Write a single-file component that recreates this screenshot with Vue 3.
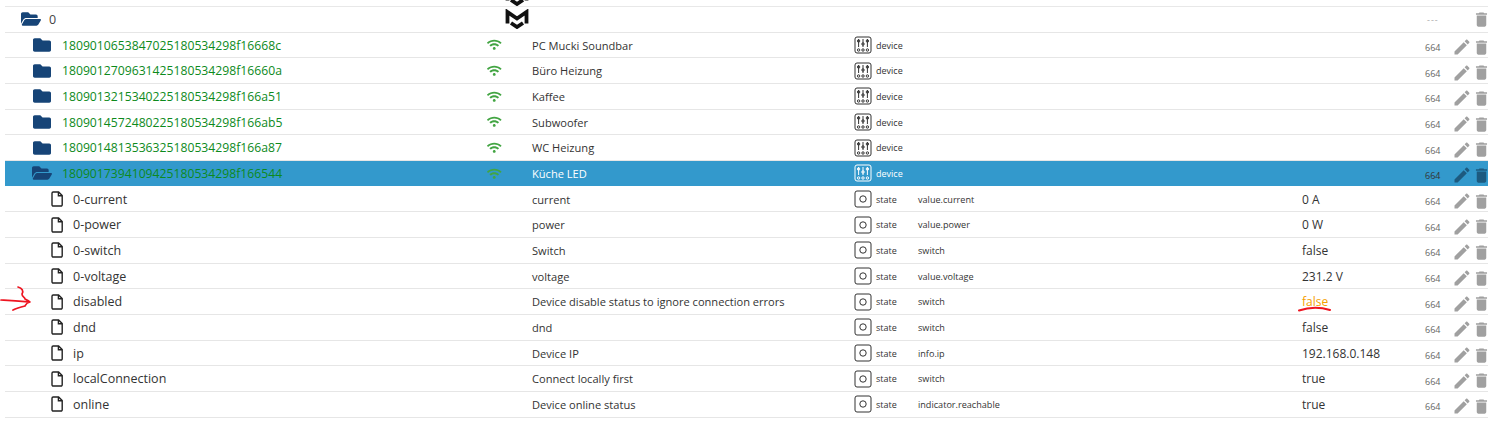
<script setup>
const folders = [
  { id: '1809010653847025180534298f16668c', name: 'PC Mucki Soundbar' },
  { id: '1809012709631425180534298f16660a', name: 'Büro Heizung' },
  { id: '1809013215340225180534298f166a51', name: 'Kaffee' },
  { id: '1809014572480225180534298f166ab5', name: 'Subwoofer' },
  { id: '1809014813536325180534298f166a87', name: 'WC Heizung' },
]
const states = [
  { id: '0-current', name: 'current', role: 'value.current', value: '0 A' },
  { id: '0-power', name: 'power', role: 'value.power', value: '0 W' },
  { id: '0-switch', name: 'Switch', role: 'switch', value: 'false' },
  { id: '0-voltage', name: 'voltage', role: 'value.voltage', value: '231.2 V' },
  { id: 'disabled', name: 'Device disable status to ignore connection errors', role: 'switch', value: 'false', warn: true },
  { id: 'dnd', name: 'dnd', role: 'switch', value: 'false' },
  { id: 'ip', name: 'Device IP', role: 'info.ip', value: '192.168.0.148' },
  { id: 'localConnection', name: 'Connect locally first', role: 'switch', value: 'true' },
  { id: 'online', name: 'Device online status', role: 'indicator.reachable', value: 'true' },
]
const folderPath = 'M464 128H272l-64-64H48C21.49 64 0 85.49 0 112v288c0 26.51 21.49 48 48 48h416c26.51 0 48-21.49 48-48V176c0-26.51-21.49-48-48-48z'
const openPath = 'M572.694 292.093L500.27 416.248A63.997 63.997 0 0 1 444.989 448H45.025c-18.523 0-30.064-20.093-20.731-36.093l72.424-124.155A64 64 0 0 1 152 256h399.964c18.523 0 30.064 20.093 20.73 36.093zM152 224h328v-48c0-26.51-21.49-48-48-48H272l-64-64H48C21.49 64 0 85.49 0 112v278.046l69.077-118.418C86.214 242.25 117.989 224 152 224z'
const wifiPath = 'M634.91 154.88C457.74-8.99 182.19-8.93 5.09 154.88c-6.66 6.16-6.79 16.59-.35 22.98l34.24 33.97c6.14 6.1 16.02 6.23 22.4.38 145.92-133.68 371.3-133.71 517.25 0 6.38 5.85 16.26 5.71 22.4-.38l34.24-33.97c6.43-6.39 6.3-16.82-.36-22.98zM320 352c-35.35 0-64 28.65-64 64s28.65 64 64 64 64-28.65 64-64-28.65-64-64-64zm202.67-83.59c-115.26-101.93-290.21-101.82-405.34 0-6.9 6.1-7.12 16.69-.57 23.15l34.44 33.99c6 5.92 15.66 6.32 22.05.8 83.95-72.57 209.74-72.41 293.49 0 6.39 5.52 16.05 5.13 22.05-.8l34.44-33.99c6.56-6.46 6.33-17.06-.56-23.15z'
const pencilPath = 'M20.71 7.04c.39-.39.39-1.04 0-1.41l-2.34-2.34c-.37-.39-1.02-.39-1.41 0l-1.84 1.83 3.75 3.75M3 17.25V21h3.75L17.81 9.93l-3.75-3.75L3 17.25z'
const trashPath = 'M6 19c0 1.1.9 2 2 2h8c1.1 0 2-.9 2-2V7H6v12zM19 4h-3.5l-1-1h-5l-1 1H5v2h14V4z'
</script>

<template>
  <div class="page">
    <div class="strip">
      <svg class="logo logo-top" viewBox="0 0 24 20"><path d="M2.5 14.5V3L12 9.5L21.5 3V14.5M6 14L12 18L18 14" /></svg>
    </div>

    <div class="row root">
      <div class="c-tree">
        <svg class="open-root" viewBox="0 0 576 512"><path :d="openPath" /></svg>
        <span class="root-id">0</span>
      </div>
      <div class="c-wifi">
        <svg class="logo" viewBox="0 0 24 20"><path d="M2.5 14.5V3L12 9.5L21.5 3V14.5M6 14L12 18L18 14" /></svg>
      </div>
      <div class="c-name"></div>
      <div class="c-type"></div>
      <div class="c-role"></div>
      <div class="c-value"></div>
      <div class="c-acl dashes">---</div>
      <div class="c-pen"></div>
      <svg class="trash" viewBox="0 0 24 24"><path :d="trashPath" /></svg>
    </div>

    <div v-for="f in folders" :key="f.id" class="row">
      <div class="c-tree lvl1">
        <svg class="folder" viewBox="0 0 512 512"><path :d="folderPath" /></svg>
        <span class="green">{{ f.id }}</span>
      </div>
      <div class="c-wifi"><svg class="wifi" viewBox="0 0 640 512"><path :d="wifiPath" /></svg></div>
      <div class="c-name">{{ f.name }}</div>
      <div class="c-type">
        <svg class="type-icon" viewBox="0 0 18 18">
          <rect x="1" y="1" width="16" height="16" rx="2" />
          <path d="M4.6 3V11M9 3V11M13.4 3V11" />
          <circle cx="4.6" cy="5" r="1.2" /><circle cx="9" cy="8" r="1.2" /><circle cx="13.4" cy="5" r="1.2" />
          <circle cx="4.6" cy="14" r="1.2" /><circle cx="9" cy="14" r="1.2" /><circle cx="13.4" cy="14" r="1.2" />
        </svg>
        <span>device</span>
      </div>
      <div class="c-role"></div>
      <div class="c-value"></div>
      <div class="c-acl">664</div>
      <div class="c-pen"><svg class="pen" viewBox="0 0 24 24"><path :d="pencilPath" /></svg></div>
      <svg class="trash low" viewBox="0 0 24 24"><path :d="trashPath" /></svg>
    </div>

    <div class="row selected">
      <div class="c-tree lvl1">
        <svg class="folder" viewBox="0 0 576 512"><path :d="openPath" /></svg>
        <span class="green">1809017394109425180534298f166544</span>
      </div>
      <div class="c-wifi"><svg class="wifi" viewBox="0 0 640 512"><path :d="wifiPath" /></svg></div>
      <div class="c-name">Küche LED</div>
      <div class="c-type">
        <svg class="type-icon" viewBox="0 0 18 18">
          <rect x="1" y="1" width="16" height="16" rx="2" />
          <path d="M4.6 3V11M9 3V11M13.4 3V11" />
          <circle cx="4.6" cy="5" r="1.2" /><circle cx="9" cy="8" r="1.2" /><circle cx="13.4" cy="5" r="1.2" />
          <circle cx="4.6" cy="14" r="1.2" /><circle cx="9" cy="14" r="1.2" /><circle cx="13.4" cy="14" r="1.2" />
        </svg>
        <span>device</span>
      </div>
      <div class="c-role"></div>
      <div class="c-value"></div>
      <div class="c-acl">664</div>
      <div class="c-pen"><svg class="pen" viewBox="0 0 24 24"><path :d="pencilPath" /></svg></div>
      <svg class="trash low" viewBox="0 0 24 24"><path :d="trashPath" /></svg>
    </div>

    <div v-for="s in states" :key="s.id" class="row">
      <div class="c-tree lvl2">
        <svg class="file" viewBox="0 0 12 16"><path d="M1 2.2A1.2 1.2 0 0 1 2.2 1H7.6L11.2 4.6V13.8A1.2 1.2 0 0 1 10 15H2.2A1.2 1.2 0 0 1 1 13.8ZM7.4 1V4.8H11.2" /></svg>
        <span class="state-id">{{ s.id }}</span>
      </div>
      <div class="c-wifi"></div>
      <div class="c-name">{{ s.name }}</div>
      <div class="c-type">
        <svg class="type-icon" viewBox="0 0 18 18">
          <rect x="1" y="1" width="16" height="16" rx="2" />
          <circle cx="9" cy="9" r="3.2" />
        </svg>
        <span>state</span>
      </div>
      <div class="c-role">{{ s.role }}</div>
      <div class="c-value" :class="{ warn: s.warn }">{{ s.value }}</div>
      <div class="c-acl">664</div>
      <div class="c-pen"><svg class="pen" viewBox="0 0 24 24"><path :d="pencilPath" /></svg></div>
      <svg class="trash low" viewBox="0 0 24 24"><path :d="trashPath" /></svg>
    </div>

    <div class="row last">
      <div class="c-tree lvl1">
        <svg class="folder" viewBox="0 0 512 512"><path :d="folderPath" /></svg>
      </div>
    </div>

    <svg class="mark arrow" viewBox="0 0 36 30">
      <path d="M1 15C10 15.5 20 16 30 17M18 2C22 3 24 6 22 9C22 12 25 12 25 14C27 15 29 16 30 17C26 18 26 19 25 21C21 22 17 23 13 25" />
    </svg>
    <svg class="mark underline" viewBox="0 0 34 6">
      <path d="M1 4.5C10 1.5 22 1 32 4" />
    </svg>
  </div>
</template>

<style>
html, body { margin: 0; background: #fff; overflow: hidden; }
</style>

<style scoped>
.page {
  position: relative;
  width: 1488px;
  height: 423px;
  overflow: hidden;
  background: #fff;
  color: #333;
  font-family: "Open Sans", "Noto Sans", sans-serif;
  font-size: 11.1px;
}
.strip {
  height: 6px;
  margin-left: 5px;
  border-bottom: 1px solid #e8e8e8;
  overflow: hidden;
  display: flex;
  align-items: flex-start;
  padding-left: 500px;
}
.row {
  display: flex;
  align-items: center;
  height: 25.67px;
  box-sizing: border-box;
  margin-left: 5px;
  border-bottom: 1.5px solid #e6e6e6;
}
.row.root { height: 25.8px; }
.row.last { border-bottom: 0; align-items: flex-start; }
.row.last .folder { margin-top: 4px; }
.c-tree { width: 475px; flex: none; box-sizing: border-box; display: flex; align-items: center; font-size: 12.2px; }
.lvl1 { padding-left: 27px; }
.lvl2 { padding-left: 46px; }
.open-root { width: 20px; height: 18px; margin-left: 16px; fill: #164477; }
.root-id { margin-left: 8px; font-size: 12.5px; color: #444; }
.folder { width: 20px; height: 18px; flex: none; fill: #164477; margin-right: 11px; }
.green { color: #0d8a1c; white-space: nowrap; margin-left: -1px; }
.file { width: 12px; height: 16px; flex: none; fill: none; stroke: #222; stroke-width: 1.4; margin-right: 10px; }
.state-id { font-size: 12.5px; color: #333; }
.c-wifi { width: 52px; flex: none; display: flex; padding-left: 7px; box-sizing: border-box; }
.wifi { width: 14.5px; height: 11.6px; fill: #43a543; }
.logo { width: 24px; height: 20px; fill: none; stroke: #111; stroke-width: 3.8; }
.logo-top { margin-top: -14px; flex: none; }
.c-wifi .logo { margin-left: 18px; flex: none; }
.c-name { width: 322px; flex: none; white-space: nowrap; color: #333; }
.c-type { width: 64px; flex: none; display: flex; align-items: center; font-size: 9px; color: #333; }
.c-type span { margin-left: 4px; }
.type-icon { width: 18px; height: 18px; flex: none; fill: none; stroke: #333; stroke-width: 1; }
.c-role { width: 384px; flex: none; font-size: 9.1px; color: #333; white-space: nowrap; }
.c-value { width: 123px; flex: none; font-size: 12px; color: #333; }
.c-value.warn { color: #f5a000; }
.c-acl { width: 26.5px; flex: none; font-size: 9px; color: #666; padding-top: 5px; }
.dashes { color: #aaa; padding-top: 0; padding-left: 2px; box-sizing: border-box; letter-spacing: 1px; }
.c-pen { width: 20px; flex: none; display: flex; margin-top: 4px; }
.pen { width: 20px; height: 20px; fill: #a0a0a0; flex: none; }
.trash { width: 19px; height: 19px; flex: none; fill: #a0a0a0; }
.trash.low { margin-top: 4px; }
.selected { background: #3399cc; border-bottom-color: #fff; }
.selected .c-name, .selected .c-type { color: #fff; }
.selected .type-icon { stroke: #fff; }
.selected .c-acl { color: #333; }
.selected .pen, .selected .trash { fill: #1d5a7f; }
.mark { position: absolute; fill: none; stroke: #ee1420; stroke-width: 1.7; stroke-linecap: round; stroke-linejoin: round; }
.arrow { left: 0; top: 285px; width: 36px; height: 30px; }
.underline { left: 1298px; top: 306px; width: 34px; height: 6px; stroke-width: 2; }
</style>
